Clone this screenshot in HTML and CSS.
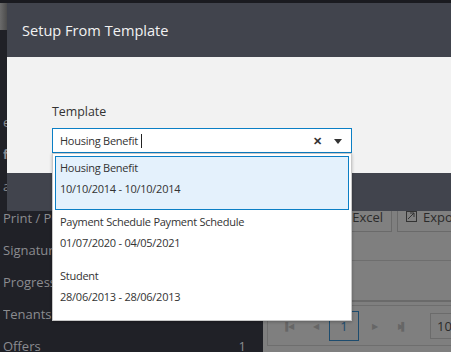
FILE: index.html
```html
<!DOCTYPE html>
<html lang="en">
<head>
  <meta charset="UTF-8" />
  <meta name="viewport" content="width=device-width, initial-scale=1" />
  <title>Setup From Template</title>
  <link rel="stylesheet" href="styles.css">
</head>
<body>

<div class="topbar"></div>

<div class="layout">
  <aside class="sidebar">
    <div class="logo"></div>
    <a class="side-item"><span class="side-label">eDocs</span></a>
    <a class="side-item bold"><span class="side-label">finance</span></a>
    <a class="side-item"><span class="side-label">alerts</span></a>
    <a class="side-item"><span class="side-label">Print / PO Requests</span></a>
    <a class="side-item"><span class="side-label">Signatures</span></a>
    <a class="side-item"><span class="side-label">Progressions</span></a>
    <a class="side-item"><span class="side-label">Tenants</span></a>
    <a class="side-item"><span class="side-label wide">Offers</span> <span class="count">1</span></a>
  </aside>

  <section class="content">
    <div class="content-top"></div>
    <div class="toolbar">
      <button class="tool-btn">Excel</button>
      <button class="tool-btn">
        <svg width="11" height="11" viewBox="0 0 11 11"><rect x="0.5" y="0.5" width="10" height="10" fill="none" stroke="#333" /><path d="M2 8 L8 2 M4 2 H8 V6" fill="none" stroke="#333" /></svg>
        Export
      </button>
    </div>
    <div class="search-row"></div>
    <div class="grid-row"></div>
    <div class="pager">
      <span class="pg-arrow">&#9612;&#9664;</span>
      <span class="pg-arrow">&#9664;</span>
      <span class="pg-num">1</span>
      <span class="pg-arrow next">&#9654;</span>
      <span class="pg-arrow next">&#9654;&#9612;</span>
      <span class="pg-size">10</span>
    </div>
  </section>
</div>

<div class="modal">
  <div class="modal-header">Setup From Template</div>
  <div class="modal-body">
    <label class="field-label" for="template">Template</label>
    <div class="combo">
      <div class="combo-input">
        <span class="combo-text">Housing Benefit</span><span class="caret"></span>
      </div>
      <span class="combo-clear">&#x2715;</span>
      <span class="combo-arrow"></span>

      <ul class="dropdown">
        <li class="option selected">
          <div>Housing Benefit</div>
          <div>10/10/2014 - 10/10/2014</div>
        </li>
        <li class="option">
          <div>Payment Schedule Payment Schedule</div>
          <div>01/07/2020 - 04/05/2021</div>
        </li>
        <li class="option">
          <div>Student</div>
          <div>28/06/2013 - 28/06/2013</div>
        </li>
      </ul>
    </div>
  </div>
  <div class="modal-footer"></div>
</div>

</body>
</html>
```

FILE: styles.css
```css
* { margin: 0; padding: 0; box-sizing: border-box; }

body {
  font-family: 'Open Sans', 'Noto Sans', sans-serif;
  background: #1f2026;
  width: 451px;
  height: 352px;
  overflow: hidden;
  position: relative;
}

.topbar {
  height: 3px;
  background: #1a1b20;
}

.layout {
  display: flex;
  height: 349px;
}

/* left navigation, dimmed by the modal */
.sidebar {
  width: 263px;
  flex-shrink: 0;
  overflow: hidden;
  background: #202127;
  display: flex;
  flex-direction: column;
}

.logo {
  height: 27px;
  width: 7px;
  flex-shrink: 0;
  background: linear-gradient(to right, #6b6b6b, #4c4c4c);
  margin-bottom: 76px;
}

.side-item {
  height: 32px;
  flex-shrink: 0;
  line-height: 32px;
  padding: 0 17px 0 3px;
  color: #8b8c90;
  font-size: 13px;
  display: flex;
  justify-content: space-between;
}

.side-label {
  width: 49px;
  overflow: hidden;
  white-space: nowrap;
}

.side-item.bold { font-weight: bold; }

.count { color: #8b8c90; }

/* grid area, dimmed */
.content {
  flex: 1;
  min-width: 0;
  overflow: hidden;
  background: #7f7f7f;
  display: flex;
  flex-direction: column;
}

.content-top { height: 199px; flex-shrink: 0; }

.toolbar {
  display: flex;
  gap: 5px;
  padding-left: 60px;
  height: 30px;
  flex-shrink: 0;
}

.tool-btn {
  height: 30px;
  flex-shrink: 0;
  border: 1px solid #6a6a6a;
  border-top: none;
  background: #808080;
  color: #2b2b2b;
  font-family: inherit;
  font-size: 13px;
  padding: 0 8px;
  display: flex;
  align-items: center;
  gap: 6px;
}

.tool-btn:first-child { width: 69px; justify-content: flex-end; }

.search-row {
  height: 29px;
  flex-shrink: 0;
  border-bottom: 1px solid #6e6e6e;
}

.grid-row {
  height: 41px;
  flex-shrink: 0;
  border-bottom: 2px solid #6a6a6a;
}

.pager {
  margin: 3px 0 0 4px;
  height: 41px;
  flex-shrink: 0;
  border: 1px solid #6e6e6e;
  border-right: none;
  display: flex;
  align-items: center;
  padding-left: 7px;
}

.pg-arrow {
  width: 26px;
  flex-shrink: 0;
  text-align: center;
  font-size: 8px;
  color: #666;
  letter-spacing: -3px;
}

.pg-arrow.next { width: 28px; }

.pg-num {
  width: 30px;
  height: 30px;
  flex-shrink: 0;
  margin-left: 2px;
  border: 1px solid #1d4c6e;
  color: #1d4c6e;
  font-size: 13px;
  display: flex;
  align-items: center;
  justify-content: center;
}

.pg-size {
  margin-left: 15px;
  width: 40px;
  height: 26px;
  flex-shrink: 0;
  border: 1px solid #6b6b6b;
  color: #2b2b2b;
  font-size: 13px;
  line-height: 24px;
  padding-left: 6px;
}

/* modal */
.modal {
  position: absolute;
  left: 7px;
  top: 3px;
  width: 460px;
  background: #f2f2f2;
}

.modal-header {
  height: 54px;
  background: #41444d;
  color: #f2f2f2;
  font-size: 14.6px;
  line-height: 54px;
  padding-left: 15px;
}

.modal-body {
  padding: 46px 0 20px 45px;
}

.field-label {
  display: block;
  color: #333;
  font-size: 12.4px;
  line-height: 18px;
  margin-bottom: 7px;
}

.combo {
  position: relative;
  width: 300px;
  height: 25px;
  border: 1px solid #0b7fc5;
  background: #fff;
}

.combo-input {
  padding-left: 7px;
  line-height: 23px;
  font-size: 11px;
  letter-spacing: -0.25px;
  color: #333;
  display: flex;
  align-items: center;
}

.caret {
  width: 1px;
  height: 14px;
  background: #222;
  margin-left: 3px;
}

.combo-clear {
  position: absolute;
  right: 29px;
  top: 4px;
  font-size: 11px;
  font-weight: bold;
  color: #333;
}

.combo-arrow {
  position: absolute;
  right: 9px;
  top: 10px;
  border-left: 4px solid transparent;
  border-right: 4px solid transparent;
  border-top: 5px solid #333;
}

.dropdown {
  position: absolute;
  left: -1px;
  top: 24px;
  width: 300px;
  list-style: none;
  background: #fff;
  border: 1px solid #c8c8c8;
  box-shadow: 0 1px 3px rgba(0, 0, 0, 0.25);
  padding: 2px;
  z-index: 2;
}

.option {
  border: 1px solid transparent;
  padding: 0 4px 10px;
  line-height: 21px;
  font-size: 11px;
  letter-spacing: -0.25px;
  color: #333;
}

.option.selected {
  background: #e4f1fc;
  border-color: #0b7fc5;
}

.modal-footer {
  height: 38px;
  background: #41444d;
}
```
